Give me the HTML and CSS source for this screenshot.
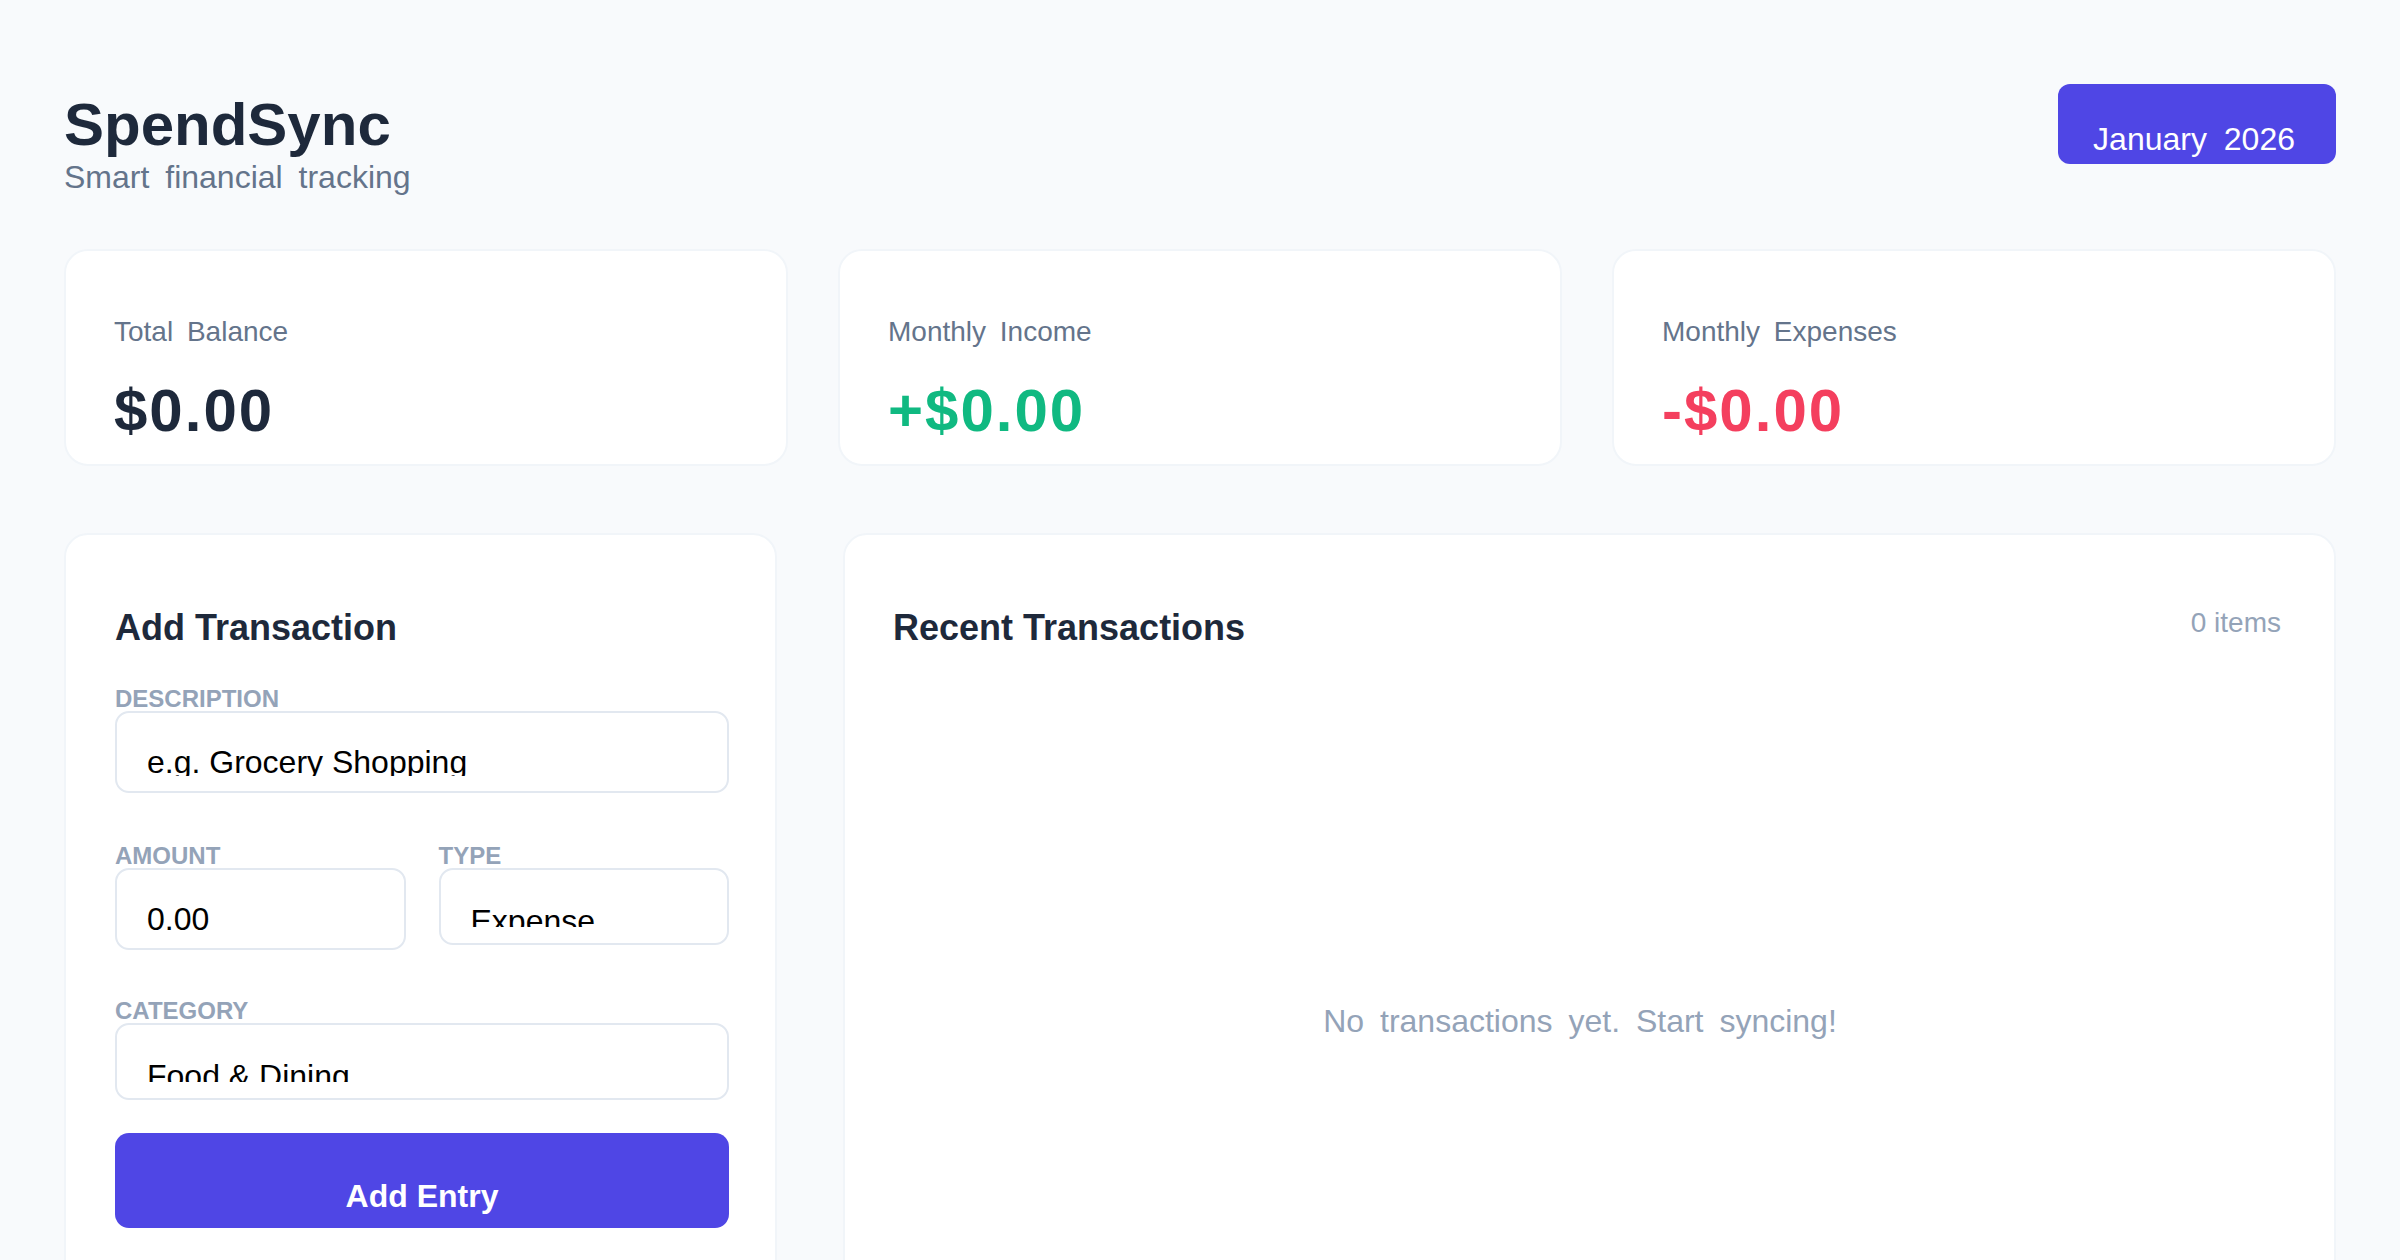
FILE: index.html
```html
<!DOCTYPE html>
<html lang="en">
<head>
    <meta charset="UTF-8">
    <meta name="viewport" content="width=device-width, initial-scale=1.0">
    <title>SpendSync</title>
    <link rel="stylesheet" href="styles.css">
</head>
<body>
<div class="app">
    <header class="top">
        <div class="brand">
            <h1>SpendSync</h1>
            <p>Smart financial tracking</p>
        </div>
        <div class="month">January 2026</div>
    </header>

    <section class="stats">
        <div class="stat">
            <div class="stat-label">Total Balance</div>
            <div class="stat-value">$0.00</div>
        </div>
        <div class="stat">
            <div class="stat-label">Monthly Income</div>
            <div class="stat-value income">+$0.00</div>
        </div>
        <div class="stat">
            <div class="stat-label">Monthly Expenses</div>
            <div class="stat-value expense">-$0.00</div>
        </div>
    </section>

    <main class="layout">
        <section class="panel form-panel">
            <h2>Add Transaction</h2>
            <form id="entry-form">
                <div class="field">
                    <label for="desc">Description</label>
                    <div class="control">
                        <input id="desc" type="text" value="e.g. Grocery Shopping">
                    </div>
                </div>
                <div class="row">
                    <div>
                        <label for="amount">Amount</label>
                        <div class="control">
                            <input id="amount" type="text" value="0.00">
                        </div>
                    </div>
                    <div>
                        <label for="type">Type</label>
                        <select id="type">
                            <option>Expense</option>
                            <option>Income</option>
                        </select>
                    </div>
                </div>
                <div class="field last">
                    <label for="category">Category</label>
                    <select id="category">
                        <option>Food &amp; Dining</option>
                        <option>Transport</option>
                        <option>Shopping</option>
                        <option>Bills</option>
                        <option>Salary</option>
                    </select>
                </div>
                <button type="button" class="add-btn">Add Entry</button>
            </form>
        </section>

        <section class="panel list-panel">
            <div class="list-head">
                <h2>Recent Transactions</h2>
                <span class="count">0 items</span>
            </div>
            <div class="empty">No transactions yet. Start syncing!</div>
        </section>
    </main>
</div>
</body>
</html>
```

FILE: styles.css
```css
* {
    box-sizing: border-box;
}
body {
    margin: 0;
    background: #f8fafc;
    font-family: "Liberation Sans", Arial, sans-serif;
    color: #1e293b;
}
.app {
    padding: 84px 64px 0;
}
.top {
    display: flex;
    justify-content: space-between;
    align-items: flex-start;
}
.brand h1 {
    margin: 11px 0 0;
    font-size: 60px;
    line-height: 60px;
    font-weight: 700;
}
.brand p {
    margin: 9px 0 0;
    font-size: 32px;
    line-height: 26px;
    color: #64748b;
    word-spacing: 7px;
}
.month {
    background: #4f46e5;
    color: #fff;
    border-radius: 12px;
    padding: 36px 41px 6px 35px;
    font-size: 32px;
    line-height: 1.2;
    word-spacing: 8px;
}

.stats {
    display: grid;
    grid-template-columns: repeat(3, 1fr);
    gap: 50px;
    margin-top: 59px;
}
.stat {
    background: #fff;
    border: 2px solid #f1f5f9;
    border-radius: 24px;
    padding: 64px 48px 17px;
}
.stat-label {
    font-size: 28px;
    line-height: 1.2;
    color: #64748b;
    word-spacing: 6px;
}
.stat-value {
    margin-top: 26px;
    font-size: 60px;
    line-height: 72px;
    font-weight: 700;
    letter-spacing: 2px;
    color: #1e293b;
}
.stat-value.income { color: #10b981; }
.stat-value.expense { color: #f43f5e; }

.layout {
    display: grid;
    grid-template-columns: 713px 1fr;
    gap: 66px;
    margin-top: 67px;
}
.panel {
    background: #fff;
    border: 2px solid #f1f5f9;
    border-radius: 24px;
    padding: 71px 48px 48px;
}
.form-panel {
    padding-left: 49px;
    padding-right: 46px;
}
.list-panel {
    padding-right: 53px;
}
.panel h2 {
    margin: 0 0 39px;
    font-size: 36px;
    line-height: 1.2;
    font-weight: 700;
}

label {
    display: block;
    margin-bottom: 1px;
    font-size: 24px;
    line-height: 22px;
    font-weight: 700;
    color: #94a3b8;
    text-transform: uppercase;
}
.control, select {
    display: block;
    width: 100%;
    border: 2px solid #e2e8f0;
    border-radius: 14px;
    background: #fff;
    color: #000;
    font-family: inherit;
    font-size: 32px;
}
.control {
    height: 82px;
    padding: 36px 30px 15px;
}
.control input {
    display: block;
    width: 100%;
    height: 27px;
    padding: 0;
    border: 0;
    background: transparent;
    color: #000;
    font-family: inherit;
    font-size: 32px;
    outline: none;
}
select {
    -webkit-appearance: none;
    appearance: none;
    height: 77px;
    padding: 33px 30px 16px;
    outline: none;
}
.field {
    margin-bottom: 52px;
}
.field.last {
    margin-bottom: 33px;
}
.row {
    display: grid;
    grid-template-columns: 1fr 1fr;
    gap: 33px;
    margin-bottom: 50px;
}
.add-btn {
    display: block;
    width: 100%;
    border: 0;
    border-radius: 14px;
    background: #4f46e5;
    color: #fff;
    font-family: inherit;
    font-size: 32px;
    font-weight: 700;
    line-height: 1.2;
    padding: 44px 0 13px;
}

.list-head {
    display: flex;
    justify-content: space-between;
    align-items: flex-start;
}
.list-head h2 {
    margin: 0;
}
.count {
    font-size: 28px;
    line-height: 1.2;
    color: #94a3b8;
}
.empty {
    padding: 353px 14px 360px 0;
    text-align: center;
    font-size: 32px;
    line-height: 1.2;
    color: #94a3b8;
    word-spacing: 7px;
}
```
